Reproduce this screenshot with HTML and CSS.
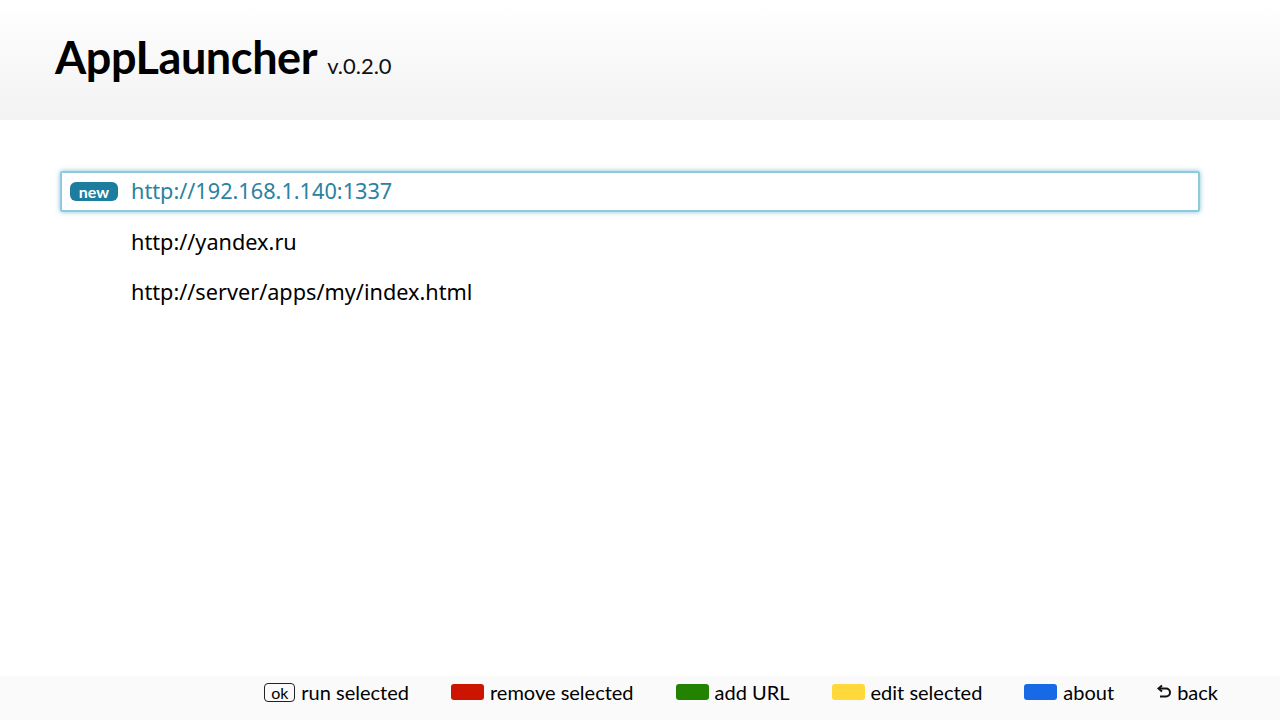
FILE: index.html
```html
<!DOCTYPE html>
<html>
<head>
<meta charset="utf-8">
<link rel="stylesheet" href="styles.css">
</head>
<body>
<div class="app">
  <header class="header">
    <h1 class="title">AppLauncher</h1>
    <span class="version">v.0.2.0</span>
  </header>
  <main class="main">
    <ul class="list">
      <li class="item selected"><span class="badge">new</span><span class="url">http://192.168.1.140:1337</span></li>
      <li class="item"><span class="url">http://yandex.ru</span></li>
      <li class="item"><span class="url">http://server/apps/my/index.html</span></li>
    </ul>
  </main>
  <footer class="footer">
    <div class="hint"><span class="key">ok</span>run selected</div>
    <div class="hint"><span class="swatch red"></span>remove selected</div>
    <div class="hint"><span class="swatch green"></span>add URL</div>
    <div class="hint"><span class="swatch yellow"></span>edit selected</div>
    <div class="hint"><span class="swatch blue"></span>about</div>
    <div class="hint"><span class="back-icon">
      <svg width="16" height="16" viewBox="0 0 16 16"><path d="M3.5 4.5 H10 A4 4 0 0 1 10 12.5 H4" fill="none" stroke="#111" stroke-width="2"/><path d="M6 1.5 L2.5 4.5 L6 7.5" fill="none" stroke="#111" stroke-width="2"/></svg>
    </span>back</div>
  </footer>
</div>
</body>
</html>
```
FILE: styles.css
```css
* { box-sizing: border-box; }
html, body { margin: 0; padding: 0; }
body {
  width: 1280px;
  height: 720px;
  background: #fff;
  font-family: Lato, "Noto Sans", sans-serif;
  color: #000;
  overflow: hidden;
}
.app {
  display: flex;
  flex-direction: column;
  height: 720px;
}
.header {
  height: 120px;
  background: linear-gradient(to bottom, #ffffff 0%, #f2f2f2 100%);
  display: flex;
  align-items: baseline;
  padding: 28px 0 0 55px;
}
.title {
  margin: 0;
  font-size: 45px;
  font-weight: 700;
  letter-spacing: -0.4px;
  line-height: 58px;
}
.version {
  font-size: 22px;
  margin-left: 10px;
  color: #111;
}
.main {
  flex: 1;
  padding: 51px 80px 0 60px;
}
.list {
  list-style: none;
  margin: 0;
  padding: 0;
  display: flex;
  flex-direction: column;
  gap: 9.5px;
}
.item {
  height: 41px;
  display: flex;
  align-items: center;
  padding-left: 69px;
  font-family: "Noto Sans", sans-serif;
  font-size: 21.7px;
  color: #000;
  border: 2px solid transparent;
}
.item .url { position: relative; top: -1px; }
.item.selected {
  padding-left: 8px;
  border: 2px solid #8fcadb;
  border-radius: 2px;
  box-shadow: 0 0 5px rgba(80, 170, 200, 0.7);
  color: #2a82a3;
}
.badge {
  display: inline-block;
  background: #1d7d9e;
  color: #fff;
  font-family: Lato, sans-serif;
  font-weight: 700;
  font-size: 16px;
  line-height: 19px;
  height: 19px;
  width: 48px;
  text-align: center;
  border-radius: 6px;
  margin-right: 13px;
}
.footer {
  height: 44px;
  background: #fafafa;
  display: flex;
  justify-content: flex-end;
  align-items: center;
  padding: 0 62px 12px 0;
  gap: 42px;
  font-size: 20px;
}
.hint {
  display: flex;
  align-items: center;
}
.key {
  display: inline-block;
  border: 1px solid #222;
  border-radius: 4px;
  font-size: 16px;
  line-height: 17px;
  height: 19px;
  padding: 0 6px;
  margin-right: 6px;
}
.swatch {
  display: inline-block;
  width: 33px;
  height: 16px;
  border-radius: 3px;
  margin-right: 6px;
}
.red { background: #cc1500; }
.green { background: #238300; }
.yellow { background: #ffd83b; }
.blue { background: #1869e6; }
.back-icon {
  display: inline-flex;
  margin-right: 5px;
}
```
